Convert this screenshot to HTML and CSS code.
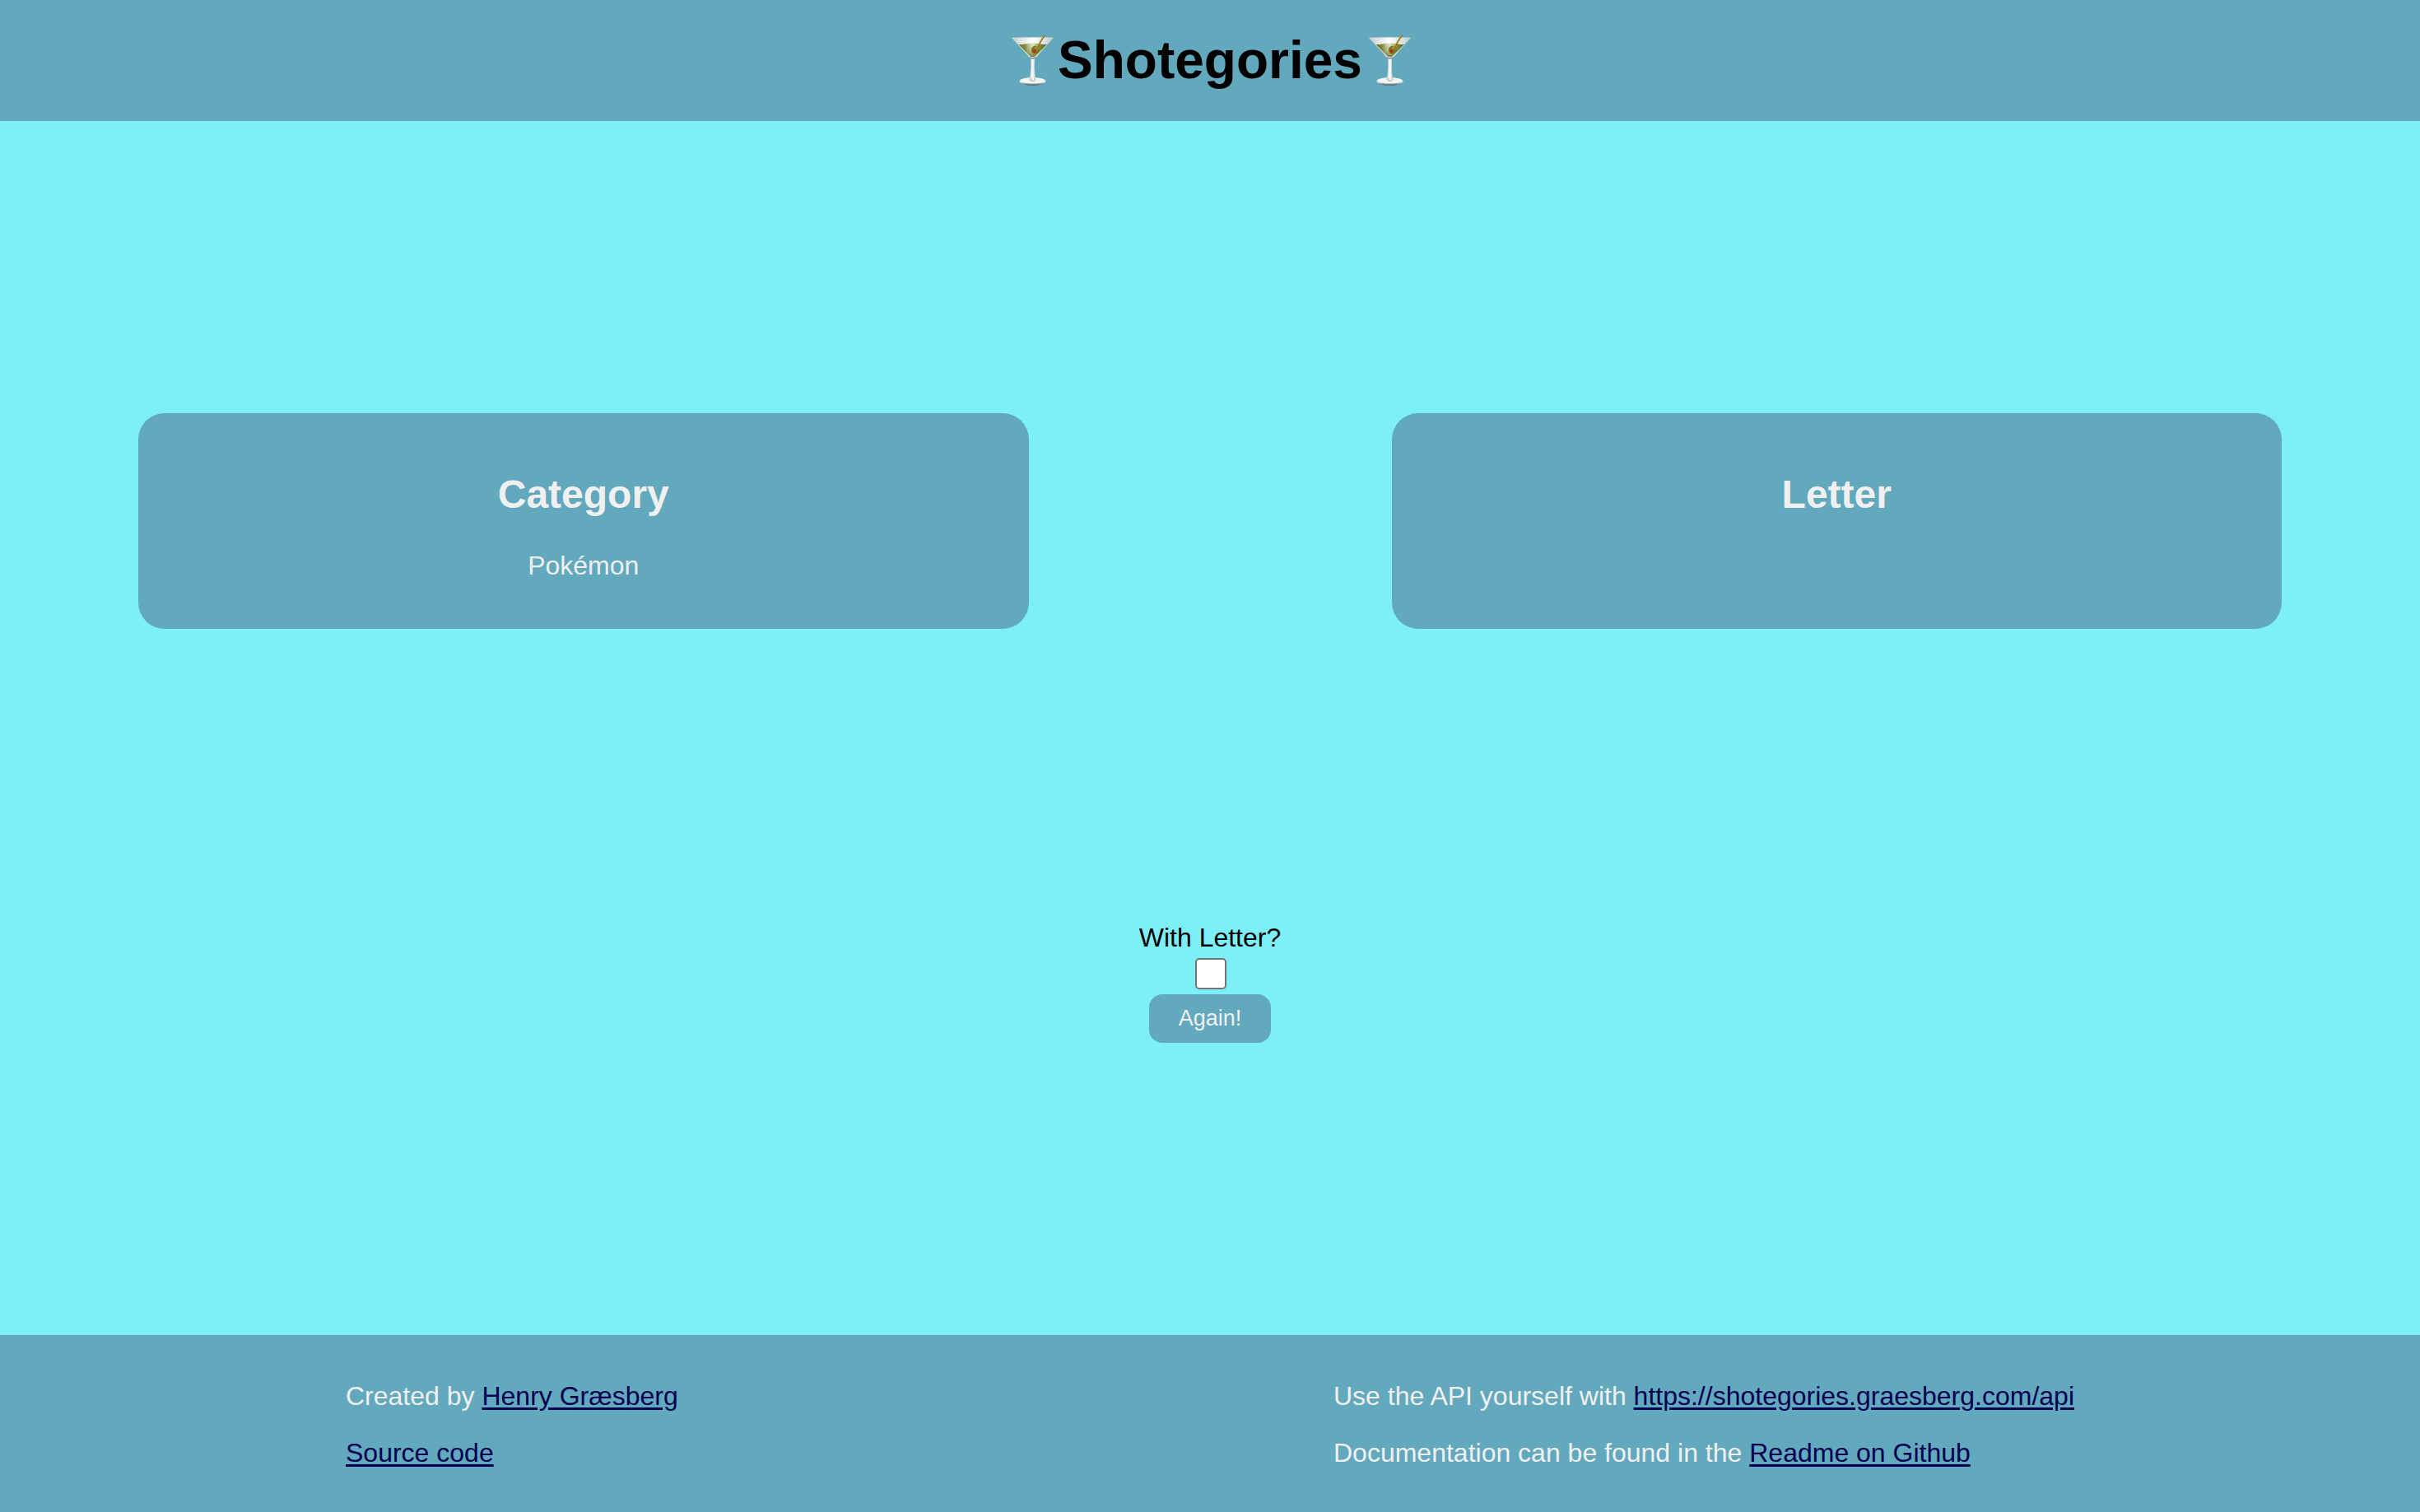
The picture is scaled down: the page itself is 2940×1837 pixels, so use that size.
FILE: index.html
```html
<!DOCTYPE html>
<html lang="en">
<head>
  <meta charset="utf-8">
  <meta name="viewport" content="width=device-width, initial-scale=1">
  <title>Shotegories</title>
  <link rel="stylesheet" href="styles.css">
</head>
<body>
  <svg class="defs" width="0" height="0" aria-hidden="true">
    <defs>
      <linearGradient id="glass" x1="0" x2="1" y1="0" y2="0">
        <stop offset="0" stop-color="#c3cfd1"/>
        <stop offset=".25" stop-color="#e4e8e6"/>
        <stop offset=".5" stop-color="#ffffff"/>
        <stop offset=".8" stop-color="#dde2e2"/>
        <stop offset="1" stop-color="#b9c5c8"/>
      </linearGradient>
      <linearGradient id="drink" x1="0" x2="1" y1="0" y2="0">
        <stop offset="0" stop-color="#6b7530"/>
        <stop offset=".22" stop-color="#848b3c"/>
        <stop offset=".36" stop-color="#c9ccA2"/>
        <stop offset=".5" stop-color="#e6e8d2"/>
        <stop offset=".64" stop-color="#b5b97c"/>
        <stop offset=".8" stop-color="#747c2c"/>
        <stop offset="1" stop-color="#616b28"/>
      </linearGradient>
      <linearGradient id="depth" x1="0" x2="0" y1="0" y2="1">
        <stop offset="0" stop-color="#6e7628" stop-opacity="0"/>
        <stop offset=".55" stop-color="#6e7628" stop-opacity=".3"/>
        <stop offset="1" stop-color="#59611c" stop-opacity=".8"/>
      </linearGradient>
      <linearGradient id="stem" x1="0" x2="1" y1="0" y2="0">
        <stop offset="0" stop-color="#b5bfc2"/>
        <stop offset=".45" stop-color="#ffffff"/>
        <stop offset="1" stop-color="#bcc3c6"/>
      </linearGradient>
      <linearGradient id="foot" x1="0" x2="0" y1="0" y2="1">
        <stop offset="0" stop-color="#f4f5f5"/>
        <stop offset=".6" stop-color="#d4d7d9"/>
        <stop offset="1" stop-color="#4b5558"/>
      </linearGradient>
      <symbol id="martini" viewBox="0 0 64 72">
        <ellipse cx="33.5" cy="61" rx="16" ry="4.8" fill="url(#foot)"/>
        <ellipse cx="33.5" cy="60" rx="15.2" ry="3.6" fill="#f2f3f4"/>
        <path d="M31.200 32h5c-.6 9-.8 17 1.300 27q-4 3-8 0c2.100-10 2.300-18 1.700-27z" fill="url(#stem)"/>
        <ellipse cx="33.700" cy="59" rx="2.800" ry="2" fill="#b9bdbf"/>
        <ellipse cx="33.900" cy="58.200" rx="1.500" ry="1.500" fill="#ffffff"/>
        <path d="M8.500 8h50L37.500 31.500q-3.800 3-7.600 0z" fill="url(#glass)"/>
        <path d="M16.500 16q4 .2 7-.6 10-1.600 20 0 4 .8 7.500.4L36.800 30.200q-3.200 2-6.400 0z" fill="url(#drink)"/>
        <path d="M16.500 16q4 .2 7-.6 10-1.600 20 0 4 .8 7.500.4L36.800 30.200q-3.200 2-6.400 0z" fill="url(#depth)"/>
        <path d="M8.500 8.300q25-1.400 50 0" fill="none" stroke="#d4dcdd" stroke-width="1.200"/>
        <path d="M8.500 8.300 30 31.800M58.500 8.300 37.400 31.800" fill="none" stroke="#b4beba" stroke-width=".9"/>
        <path d="M30.200 31.800q3.600 2 7.200 0" fill="none" stroke="#7f8c8d" stroke-width="1.800"/>
        <circle cx="36.900" cy="22.800" r="5" fill="#737a20"/>
        <ellipse cx="38.200" cy="20.800" rx="2.600" ry="1.900" fill="#9a9e40"/>
        <circle cx="35.600" cy="24" r="2.200" fill="#b5331c"/>
        <path d="M38 21 47.700 5" fill="none" stroke="#80601a" stroke-width="2" stroke-linecap="round"/>
        <path d="M37.700 20.600 47.400 4.800" fill="none" stroke="#e0b752" stroke-width="1" stroke-linecap="round"/>
      </symbol>
    </defs>
  </svg>

  <header class="header">
    <h1 class="title">
      <svg class="glass" aria-hidden="true"><use href="#martini"/></svg>
      <span>Shotegories</span>
      <svg class="glass" aria-hidden="true"><use href="#martini"/></svg>
    </h1>
  </header>

  <main class="main">
    <div class="cards">
      <section class="card">
        <h2 class="card-title">Category</h2>
        <p class="card-text">Pokémon</p>
      </section>
      <section class="card">
        <h2 class="card-title">Letter</h2>
      </section>
    </div>

    <form class="controls">
      <label for="with-letter">With Letter?</label>
      <input class="checkbox" type="checkbox" id="with-letter">
      <button class="button" type="button">Again!</button>
    </form>
  </main>

  <footer class="footer">
    <div class="footer-column">
      <p>Created by <a href="#">Henry Græsberg</a></p>
      <p><a href="#">Source code</a></p>
    </div>
    <div class="footer-column">
      <p>Use the API yourself with <a href="#">https://shotegories.graesberg.com/api</a></p>
      <p>Documentation can be found in the <a href="#">Readme on Github</a></p>
    </div>
  </footer>
</body>
</html>
```
FILE: styles.css
```css
:root {
  --page: #7cf0f6;
  --panel: #63a9be;
  --light: #f0f0f0;
  --link: #000050;
}

* {
  box-sizing: border-box;
}

body {
  display: flex;
  flex-direction: column;
  min-height: 100vh;
  margin: 0;
  background: var(--page);
  color: #000;
  font: 32px/38px "Liberation Sans", Arial, Helvetica, sans-serif;
}

h1,
h2,
p {
  margin: 0;
}

.defs {
  position: absolute;
}

.header {
  padding: 37px 0;
  background: var(--panel);
}

.title {
  display: flex;
  justify-content: center;
  align-items: center;
  font-size: 64px;
  line-height: 73px;
}

.glass {
  width: 64px;
  height: 72px;
}

.main {
  flex: 1;
  display: flex;
  flex-direction: column;
  justify-content: space-evenly;
}

.cards {
  display: grid;
  grid-template-columns: 1fr 1fr;
  column-gap: 15vw;
  padding: 0 168px;
}

.card {
  padding: 71px 32px 58px;
  border-radius: 32px;
  background: var(--panel);
  color: var(--light);
  text-align: center;
}

.card-title {
  font-size: 48px;
  line-height: 55px;
}

.card-text {
  margin-top: 40px;
}

.controls {
  display: flex;
  flex-direction: column;
  align-items: center;
}

.checkbox {
  appearance: none;
  width: 38px;
  height: 38px;
  margin: 6px 6px 6px 8px;
  border: 2px solid #767676;
  border-radius: 5px;
  background: #fff;
}

.checkbox:checked {
  background: var(--panel);
}

.button {
  padding: 14px 36px;
  border: 0;
  border-radius: 16px;
  background: var(--panel);
  color: var(--light);
  font: 27px/31px "Liberation Sans", Arial, Helvetica, sans-serif;
}

.footer {
  display: flex;
  justify-content: space-between;
  padding: 55px 420px 53px;
  background: var(--panel);
  color: var(--light);
}

.footer-column {
  display: grid;
  row-gap: 31px;
}

.footer a {
  color: var(--link);
  text-decoration-thickness: 3px;
  text-underline-offset: 3px;
}
```
